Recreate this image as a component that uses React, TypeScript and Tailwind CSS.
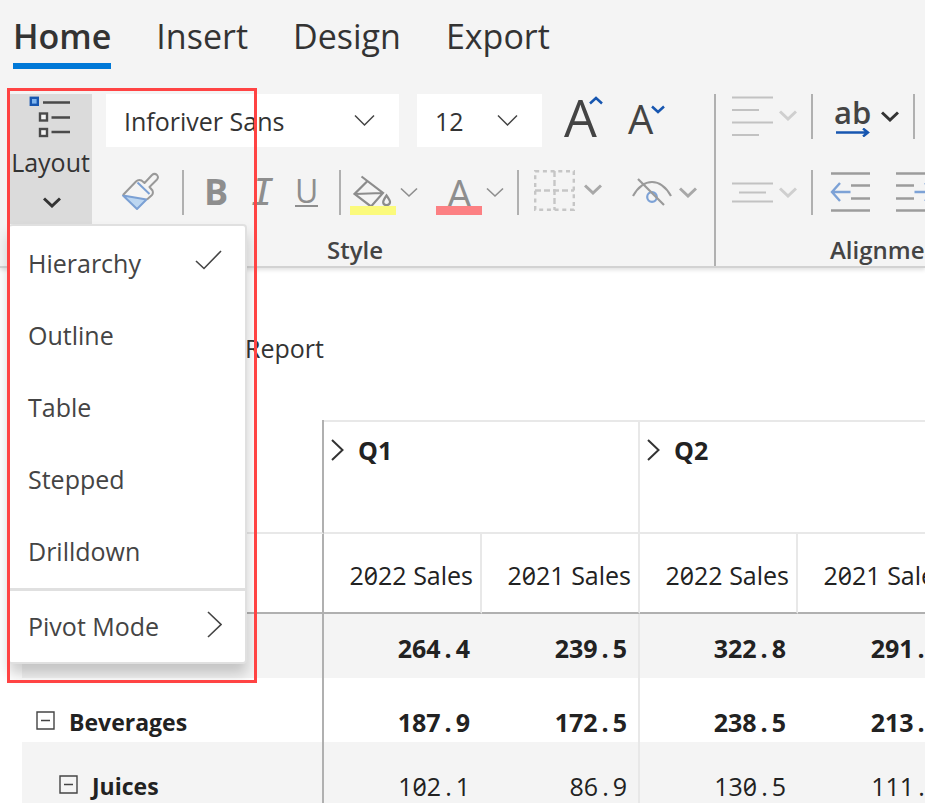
import React from "react";

type ChevronProps = { className?: string; width?: number; height?: number; stroke?: number };

function Chevron({ className = "", width = 18, height = 11, stroke = 3 }: ChevronProps) {
  return (
    <svg
      aria-hidden="true"
      className={`shrink-0 ${className}`}
      width={width}
      height={height}
      viewBox={`0 0 ${width} ${height}`}
      fill="none"
      stroke="currentColor"
      strokeWidth={stroke}
    >
      <path d={`M1 1.5L${width / 2} ${height - 2}L${width - 1} 1.5`} />
    </svg>
  );
}

function Separator({ className = "" }: { className?: string }) {
  return <span aria-hidden="true" className={`h-[45px] w-[2px] shrink-0 bg-[#b0b0b0] ${className}`} />;
}

function ToolButton({ label, className = "", children }: { label: string; className?: string; children: React.ReactNode }) {
  return (
    <button type="button" aria-label={label} className={`flex shrink-0 items-center ${className}`}>
      {children}
    </button>
  );
}

function Picker({ label, value, className }: { label: string; value: string; className: string }) {
  return (
    <div className={`grid shrink-0 items-center bg-white ${className}`}>
      <select aria-label={label} className="col-start-1 row-start-1 h-[53px] w-full appearance-none bg-transparent pt-[2px] pl-[18px] text-[25px] text-[#333]">
        <option>{value}</option>
      </select>
      <Chevron className="pointer-events-none col-start-1 row-start-1 mr-6 justify-self-end text-[#444]" width={21} height={13} stroke={1.5} />
    </div>
  );
}

function LayoutIcon() {
  return (
    <svg aria-hidden="true" className="mr-[2px]" width="42" height="44" viewBox="0 0 42 44" fill="none" stroke="#4a4a4a" strokeWidth="2.4">
      <rect x="1.8" y="2.800" width="7" height="7" fill="#7db4ee" stroke="#1756b0" />
      <rect x="11" y="18.500" width="7" height="7" fill="#f4f4f4" />
      <rect x="11" y="34" width="7" height="7" fill="#f4f4f4" />
      <path d="M14 7.500h27M22.500 22.500h18.500M22.500 37h18.500" strokeWidth="2.6" />
    </svg>
  );
}

function BrushIcon() {
  return (
    <svg aria-hidden="true" width="38" height="40" viewBox="0 0 38 40" fill="none" strokeLinejoin="round">
      <path d="M2 23.500L25.500 27.500L16 37z" fill="#bcd6f1" stroke="#7ba0d4" strokeWidth="2" />
      <path d="M2 23L15 9.500Q17.500 7 20.500 8.500L23.500 11L31 3Q33.500 .800 36 3Q38 5.500 35.800 7.800L28.500 15L31.500 18.500Q32.500 21 31 23L26 27.500" stroke="#999" strokeWidth="2" />
      <path d="M16.500 10.500L28.500 22" stroke="#7ba0d4" strokeWidth="2" />
    </svg>
  );
}

function BucketIcon() {
  return (
    <svg aria-hidden="true" width="46" height="42" viewBox="0 0 46 42" fill="none" stroke="#8c8c8c" strokeWidth="2.2">
      <path d="M11.500 3.500L33 20L21 33.500L4.500 21L17.500 8M5 21L32 20" />
      <path d="M36.500 22.500Q40.500 28 40 29.500Q39.500 32 36.500 32Q33.500 32 33.200 29.500Q33 27.500 36.500 22.500z" />
      <rect x="0" y="33" width="46" height="9" fill="#fbfa7c" stroke="none" />
    </svg>
  );
}

function BorderIcon() {
  return (
    <svg aria-hidden="true" className="mb-[3px]" width="41" height="41" viewBox="0 0 41 41" fill="none" stroke="#c6c6c6" strokeWidth="2.4">
      <rect x="1.200" y="1.200" width="38.600" height="38.600" strokeDasharray="4 3.700" />
      <path d="M20.500 1v39M1 20.500h39" strokeDasharray="6 3" />
    </svg>
  );
}

function EyeOffIcon() {
  return (
    <svg aria-hidden="true" width="40" height="30" viewBox="0 0 40 30" fill="none" strokeWidth="2.2">
      <circle cx="20" cy="20" r="4.800" stroke="#7da2d6" />
      <path d="M1 19Q9 5 20 5T39 19M6 2L32 28" stroke="#9a9a9a" />
    </svg>
  );
}

function IndentIcon({ direction }: { direction: "in" | "out" }) {
  return (
    <svg aria-hidden="true" width="40" height="42" viewBox="0 0 40 42" fill="none" stroke="#9c9c9c" strokeWidth="2.4">
      <path d="M1 2.500h39M1 39.500h39" />
      {direction === "out" ? <path d="M21 14.500h19M21 27.500h19" /> : <path d="M1 14.500h18M1 27.500h18" />}
      {direction === "out" ? (
        <path d="M20.500 21H2M10 12L2 21L10 30" stroke="#7da2d6" />
      ) : (
        <path d="M19.500 21H38M30 12L38 21L30 30" stroke="#7da2d6" />
      )}
    </svg>
  );
}

const menuItems = ["Hierarchy", "Outline", "Table", "Stepped", "Drilldown"];

function LayoutMenu() {
  return (
    <div role="menu" className="absolute top-[130px] left-0 z-20 w-[238px] rounded-[4px] border-2 border-l-0 border-[#e0e0e0] bg-white pt-[2px] text-[25px] text-[#444] shadow-[0_10px_14px_rgba(0,0,0,0.2)]">
      {menuItems.map((item, i) => (
        <button key={item} type="button" role="menuitem" className="flex h-[72px] w-full items-center justify-between pr-[23px] pl-[19px]">
          {item}
          {i === 0 && (
            <svg aria-hidden="true" className="mb-2" width="27" height="20" viewBox="0 0 27 20" fill="none" stroke="#444" strokeWidth="1.6">
              <path d="M1 11L9 18.500L26 1" />
            </svg>
          )}
        </button>
      ))}
      <button type="button" role="menuitem" className="flex h-[74px] w-full items-center justify-between border-t-[3px] border-[#e0e0e0] pr-[23px] pl-[19px]">
        Pivot Mode
        <svg aria-hidden="true" className="mb-1" width="15" height="27" viewBox="0 0 15 27" fill="none" stroke="#444" strokeWidth="1.6">
          <path d="M1 1L14 13.500L1 26" />
        </svg>
      </button>
    </div>
  );
}

function StyleGroup() {
  return (
    <section aria-label="Style" className="ml-[14px] w-[608px] shrink-0">
      <div className="flex h-[53px] items-start">
        <Picker label="Font" value="Inforiver Sans" className="w-[293px]" />
        <Picker label="Font size" value="12" className="ml-[18px] w-[125px]" />
        <ToolButton label="Increase font size" className="ml-[22px] h-[46px] text-[#444]">
          <span className="text-[52px] leading-[46px]">A</span>
          <Chevron className="-ml-2 mb-[34px] rotate-180 text-[#1756b0]" width={14} height={9} stroke={2.5} />
        </ToolButton>
        <ToolButton label="Decrease font size" className="ml-[25px] h-[46px] text-[#444]">
          <span className="pt-1 text-[40px] leading-[46px]">A</span>
          <Chevron className="-ml-[2px] mb-4 text-[#1756b0]" width={14} height={9} stroke={2.5} />
        </ToolButton>
      </div>
      <div className="mt-[17px] flex h-14 items-center text-[#8e8e8e]">
        <ToolButton label="Format painter" className="ml-[15px]">
          <BrushIcon />
        </ToolButton>
        <Separator className="ml-[23px]" />
        <ToolButton label="Bold" className="ml-5 text-[36px] leading-[44px] font-bold">B</ToolButton>
        <ToolButton label="Italic" className="ml-[23px] font-['DejaVu_Sans_Mono',monospace] text-[38px] leading-[44px] italic">I</ToolButton>
        <ToolButton label="Underline" className="ml-[21px]">
          <span className="flex h-[30px] items-center border-b-2 border-current text-[32px] leading-[30px]">U</span>
        </ToolButton>
        <Separator className="ml-[21px]" />
        <ToolButton label="Fill color" className="ml-[9px] pt-1">
          <BucketIcon />
          <Chevron className="mb-1 ml-1" stroke={1.6} />
        </ToolButton>
        <ToolButton label="Font color" className="ml-[18px] pt-1">
          <span className="flex h-[42px] w-[46px] flex-col items-center">
            <span className="h-[33px] text-[40px] leading-[42px]">A</span>
            <span aria-hidden="true" className="z-10 h-[9px] w-full bg-[#fc8083]" />
          </span>
          <Chevron className="mb-1 ml-1" stroke={1.6} />
        </ToolButton>
        <Separator className="ml-[13px]" />
        <ToolButton label="Borders" className="ml-[15px]">
          <BorderIcon />
          <Chevron className="mb-[6px] ml-[9px] text-[#a8a8a8]" />
        </ToolButton>
        <ToolButton label="Hide" className="ml-[30px]">
          <EyeOffIcon />
          <Chevron className="ml-[7px] text-[#a8a8a8]" />
        </ToolButton>
      </div>
      <h2 className="mt-[13px] pl-[221px] text-[24px] leading-[33px] font-semibold text-[#444]">Style</h2>
    </section>
  );
}

function AlignmentGroup() {
  return (
    <section aria-label="Alignment" className="min-w-0 flex-1 border-l-2 border-[#b0b0b0]">
      <div className="flex h-[45px] items-center">
        <ToolButton label="Vertical alignment" className="ml-4 pb-[2px] text-[#cfcfcf]">
          <svg aria-hidden="true" width="41" height="42" viewBox="0 0 41 42" stroke="#c2c2c2" strokeWidth="2.200">
            <path d="M0 2.500h41M0 15h27M0 27.500h41M0 40h27" />
          </svg>
          <Chevron className="ml-[6px]" />
        </ToolButton>
        <Separator className="ml-[14px]" />
        <ToolButton label="Wrap text" className="ml-[21px] text-[#333]">
          <span className="flex flex-col items-center">
            <span className="text-[31px] leading-[31px] font-semibold text-[#444]">ab</span>
            <svg aria-hidden="true" width="34" height="9" viewBox="0 0 34 9" fill="none" stroke="#1756b0" strokeWidth="2.400">
              <path d="M0 4.500h32M27 .500L32 4.500L27 8.500" />
            </svg>
          </span>
          <Chevron className="ml-[10px]" />
        </ToolButton>
        <Separator className="ml-[14px]" />
      </div>
      <div className="mt-[25px] flex h-14 items-center">
        <ToolButton label="Horizontal alignment" className="ml-4 text-[#cfcfcf]">
          <svg aria-hidden="true" width="41" height="21" viewBox="0 0 41 21" stroke="#c2c2c2" strokeWidth="2.200">
            <path d="M0 1.500h41M7 10.500h27M0 19.500h41" />
          </svg>
          <Chevron className="ml-[6px]" />
        </ToolButton>
        <Separator className="ml-[14px]" />
        <ToolButton label="Decrease indent" className="ml-[17px]">
          <IndentIcon direction="out" />
        </ToolButton>
        <ToolButton label="Increase indent" className="ml-[25px]">
          <IndentIcon direction="in" />
        </ToolButton>
      </div>
      <h2 className="mt-[13px] pl-[114px] text-[24px] leading-[33px] font-semibold text-[#444]">Alignment</h2>
    </section>
  );
}

const tabs = ["Home", "Insert", "Design", "Export"];

type Row = { name: string; level: number; bold: boolean; values: string[] };

const rows: Row[] = [
  { name: "", level: 0, bold: true, values: ["264.4", "239.5", "322.8", "291.2"] },
  { name: "Beverages", level: 0, bold: true, values: ["187.9", "172.5", "238.5", "213.1"] },
  { name: "Juices", level: 1, bold: false, values: ["102.1", "86.9", "130.5", "111.4"] },
];

function Figure({ value }: { value: string }) {
  const [whole, fraction] = value.split(".");
  return (
    <>
      {whole}
      <span className="px-1">.</span>
      {fraction}
    </>
  );
}

function ReportTable() {
  return (
    <table className="mt-[55px] ml-[22px] w-[934px] table-fixed border-separate border-spacing-0 text-[25px] leading-[34px] text-[#222]">
      <colgroup>
        <col className="w-[302px]" />
        <col className="w-[158px]" />
        <col className="w-[158px]" />
        <col className="w-[158px]" />
        <col className="w-[158px]" />
      </colgroup>
      <thead>
        <tr className="h-[114px]">
          <td className="border-r-2 border-b-2 border-r-[#b0b0b0] border-b-[#e8e8e8]" />
          {["Q1", "Q2"].map((quarter) => (
            <th key={quarter} colSpan={2} scope="colgroup" className="border-t-2 border-r-2 border-b-2 border-[#e8e8e8] p-0 align-top">
              <button type="button" className="flex items-center gap-[14px] pt-[11px] pl-[7px] font-bold">
                <svg aria-hidden="true" width="13" height="22" viewBox="0 0 13 22" fill="none" stroke="#333" strokeWidth="2">
                  <path d="M1 1L11.500 11L1 21" />
                </svg>
                {quarter}
              </button>
            </th>
          ))}
        </tr>
        <tr className="h-20">
          <td className="border-r-2 border-b-2 border-[#b0b0b0]" />
          {["2022 Sales", "2021 Sales", "2022 Sales", "2021 Sales"].map((title, i) => (
            <th key={i} scope="col" className="border-r-2 border-b-2 border-r-[#e8e8e8] border-b-[#b0b0b0] p-0 pt-1 pr-[7px] text-right font-normal whitespace-nowrap slashed-zero">
              {title}
            </th>
          ))}
        </tr>
      </thead>
      <tbody>
        {rows.map((row, r) => (
          <tr key={r} className={`h-16 ${r % 2 === 0 ? "bg-[#f4f4f4]" : "bg-white"}`}>
            <th scope="row" className={`border-r-2 border-[#b0b0b0] p-0 text-left ${r > 0 ? "pt-6" : "pt-1"}`}>
              {row.name && (
                <button type="button" className={`flex items-center gap-[14px] text-[23px] leading-[34px] font-bold ${row.level > 0 ? "pl-[37px]" : "pl-[14px]"}`}>
                  <svg aria-hidden="true" className="mb-1" width="19" height="19" viewBox="0 0 19 19" fill="none" stroke="#444" strokeWidth="1.400">
                    <path d="M1 1h17v17H1zM5 9.500h9" />
                  </svg>
                  {row.name}
                </button>
              )}
            </th>
            {row.values.map((value, i) => (
              <td
                key={i}
                className={`p-0 text-right slashed-zero ${i % 2 === 1 ? "border-r-2 border-[#e8e8e8] pr-[11px]" : "pr-[12px]"} ${row.bold ? "font-bold" : "font-medium"} ${r > 0 ? "pt-6" : "pt-1"}`}
              >
                <Figure value={value} />
              </td>
            ))}
          </tr>
        ))}
      </tbody>
    </table>
  );
}

export default function App() {
  return (
    <div className="relative h-screen overflow-hidden bg-white font-['Open_Sans','Noto_Sans',sans-serif] text-[#333]">
      <header className="border-b-2 border-[#d2d2d2] bg-[#f4f4f4] shadow-[0_2px_4px_rgba(0,0,0,0.12)]">
        <nav className="flex gap-[45px] pl-[13px]">
          {tabs.map((tab, i) => (
            <a
              key={tab}
              href={`#${tab.toLowerCase()}`}
              className={`border-b-[6px] pt-3 pb-[3px] text-[34px] leading-[48px] ${i === 0 ? "border-[#0078d7] font-semibold" : "border-transparent"}`}
            >
              {tab}
            </a>
          ))}
        </nav>
        <div className="flex pt-[25px] pl-[9px]">
          <div className="relative w-[83px] shrink-0">
            <button type="button" aria-haspopup="menu" aria-expanded="true" className="flex h-[130px] w-full flex-col items-center bg-[#dbdbdb] pt-px text-[25px] leading-[34px]">
              <LayoutIcon />
              <span className="mt-[6px]">Layout</span>
              <Chevron className="mt-[18px] ml-[2px]" />
            </button>
            <LayoutMenu />
          </div>
          <StyleGroup />
          <AlignmentGroup />
        </div>
      </header>
      <main>
        <h1 className="pt-[63px] pl-[245px] text-[25px] leading-[34px]">Report</h1>
        <ReportTable />
      </main>
      <div aria-hidden="true" className="pointer-events-none absolute top-[88px] left-[7px] z-30 h-[595px] w-[250px] border-[3px] border-[#ff4343]" />
    </div>
  );
}
